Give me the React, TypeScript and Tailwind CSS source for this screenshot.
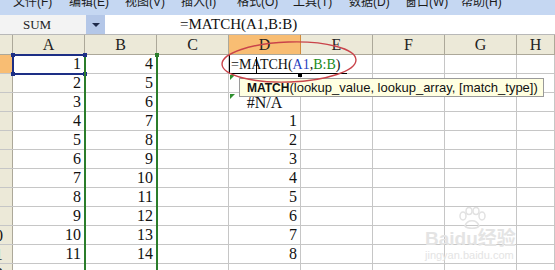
import React from 'react';

const cols = ['A', 'B', 'C', 'D', 'E', 'F', 'G', 'H'];
const menus = ['文件(F)', '编辑(E)', '视图(V)', '插入(I)', '格式(O)', '工具(T)', '数据(D)', '窗口(W)', '帮助(H)'];
const rows = Array.from({ length: 12 }, (_, i) => i + 1);

// SimSun-like cell text: serif digits, narrow formula
const cellFont = "font-['Liberation_Serif',serif] text-[16px]";
const formulaFont = "font-['Liberation_Serif',serif] text-[14px]";

function cellValue(col: string, r: number): string {
  if (r > 11) return '';
  if (col === 'A') return String(r);
  if (col === 'B') return String(r + 3);
  if (col === 'D' && r >= 4) return String(r - 3);
  return '';
}

export default function App() {
  return (
    <div className="relative w-[555px] h-[270px] overflow-hidden bg-white">
      {/* menu bar, cut at the top */}
      <div className="h-[15px] bg-[#c5d7f2] overflow-hidden flex pl-[13px] font-['Liberation_Sans','Noto_Sans_CJK_SC',sans-serif] text-[12px] leading-[12px] text-[#1b1b1b]">
        {menus.map(m => (
          <span key={m} className="w-[56px] shrink-0 -mt-[4px] whitespace-nowrap">{m}</span>
        ))}
      </div>

      {/* formula bar */}
      <div className="flex h-[20px] border-b border-[#b8b8b8]">
        <div className="w-[86px] bg-[#f3f3f3] pl-[23px] flex items-center font-['Liberation_Serif',serif] text-[13px] text-[#222]">
          SUM
        </div>
        <div className="w-[19px] bg-[#b4c7e8] flex items-center justify-center">
          <div className="w-0 h-0 border-l-[4px] border-r-[4px] border-t-[4px] border-l-transparent border-r-transparent border-t-[#1e2a4a]" />
        </div>
        <div className="flex-1 flex items-center pl-[75px] text-[#111] font-['Liberation_Serif',serif] text-[15px]">=MATCH(A1,B:B)</div>
      </div>

      {/* column headers */}
      <div className={`flex h-[20px] bg-[#ece9d8] border-b border-[#aca899] text-[#222] ${cellFont}`}>
        <div className="w-[13px] border-r border-[#aca899]" />
        {cols.map(c => (
          <div
            key={c}
            className={`${c === 'H' ? 'flex-1' : 'w-[72px] shrink-0'} flex items-center justify-center border-r ${
              c === 'D' ? 'bg-[#f8bd73] border-[#d28a3a]' : 'border-[#aca899]'
            }`}
          >
            {c}
          </div>
        ))}
      </div>

      {/* data rows */}
      {rows.map(r => (
        <div key={r} className={`flex h-[19px] border-b border-[#c6c6c6] text-[#111] ${cellFont}`}>
          <div
            className={`w-[13px] shrink-0 overflow-hidden border-r border-[#aca899] ${
              r === 1 ? 'bg-[#f8bd73]' : 'bg-[#ece9d8]'
            }`}
          >
            <div className="w-[34px] -ml-[22px] text-center leading-[19px]">{r}</div>
          </div>
          {cols.map(c => (
            <div
              key={c}
              className={`${c === 'H' ? 'flex-1' : 'w-[72px] shrink-0'} border-r border-[#c6c6c6] flex items-center ${
                c === 'D' && r === 3 ? 'justify-center pt-[2px]' : 'justify-end pr-[3px]'
              }`}
            >
              {c === 'D' && r === 3 ? '#N/A' : cellValue(c, r)}
            </div>
          ))}
        </div>
      ))}

      {/* A1 reference box */}
      <div className="absolute left-[12px] top-[54px] w-[74px] h-[21px] border-2 border-[#1d2f85]" />
      <div className="absolute left-[11px] top-[53px] w-[4px] h-[4px] bg-[#1d2f85]" />
      <div className="absolute left-[83px] top-[53px] w-[4px] h-[4px] bg-[#1d2f85]" />
      <div className="absolute left-[11px] top-[72px] w-[4px] h-[4px] bg-[#1d2f85]" />
      <div className="absolute left-[83px] top-[72px] w-[4px] h-[4px] bg-[#1d2f85]" />

      {/* B:B reference lines */}
      <div className="absolute left-[84px] top-[57px] w-[2px] h-[220px] bg-[#2b7d2b]" />
      <div className="absolute left-[156px] top-[55px] w-[2px] h-[220px] bg-[#2b7d2b]" />
      <div className="absolute left-[155px] top-[53px] w-[4px] h-[4px] bg-[#2b7d2b]" />

      {/* D1 in edit mode */}
      <div className={`absolute left-[229px] top-[55px] w-[118px] h-[19px] bg-white border-l border-b border-black flex items-center pl-[1px] text-[#111] ${formulaFont}`}>
        <span>=MATCH(</span>
        <span className="text-[#1f3fbf]">A1</span>
        <span>,</span>
        <span className="text-[#1a8a1a]">B:B</span>
        <span>)</span>
      </div>
      <div className="absolute left-[256px] top-[57px] w-[1px] h-[16px] bg-black" />
      <div className="absolute left-[298px] top-[73px] w-[4px] h-[4px] bg-black" />

      {/* error indicators */}
      <div className="absolute left-[230px] top-[75px] w-0 h-0 border-t-[5px] border-r-[5px] border-t-[#2f8f2f] border-r-transparent" />
      <div className="absolute left-[230px] top-[94px] w-0 h-0 border-t-[5px] border-r-[5px] border-t-[#2f8f2f] border-r-transparent" />

      {/* function tooltip */}
      <div className="absolute left-[239px] top-[78px] w-[305px] h-[19px] bg-[#ffffe1] border border-[#9a9a9a] flex items-center pl-[7px] font-['Liberation_Sans',sans-serif] text-[13px] text-[#111] whitespace-nowrap">
        <span className="font-bold text-[12px]">MATCH</span>
        <span>(lookup_value, lookup_array, [match_type])</span>
      </div>

      {/* red annotation ellipse */}
      <svg className="absolute left-0 top-0 pointer-events-none" width="555" height="270">
        <ellipse cx="289" cy="62" rx="67" ry="20" transform="rotate(-2 289 62)" fill="none" stroke="#c9434a" strokeWidth="1.4" />
      </svg>

      {/* watermark */}
      <div className="absolute left-[425px] top-[207px] flex flex-col items-start pointer-events-none font-['Liberation_Sans','Noto_Sans_CJK_SC',sans-serif] text-[#e4e4e4]">
        <svg className="ml-[30px]" width="34" height="22" viewBox="0 0 34 22" fill="none" stroke="#e2e2e2" strokeWidth="1.5">
          <ellipse cx="8" cy="9" rx="3" ry="4" />
          <ellipse cx="14" cy="4" rx="3" ry="3.5" />
          <ellipse cx="21" cy="4" rx="3" ry="3.5" />
          <ellipse cx="27" cy="9" rx="3" ry="4" />
          <path d="M10 19 C12 12, 22 12, 24 19 C22 22, 12 22, 10 19 Z" />
        </svg>
        <div className="text-[19px] font-bold leading-[20px]">Baidu经验</div>
        <div className="text-[11px] leading-[13px]">jingyan.baidu.com</div>
      </div>
    </div>
  );
}
